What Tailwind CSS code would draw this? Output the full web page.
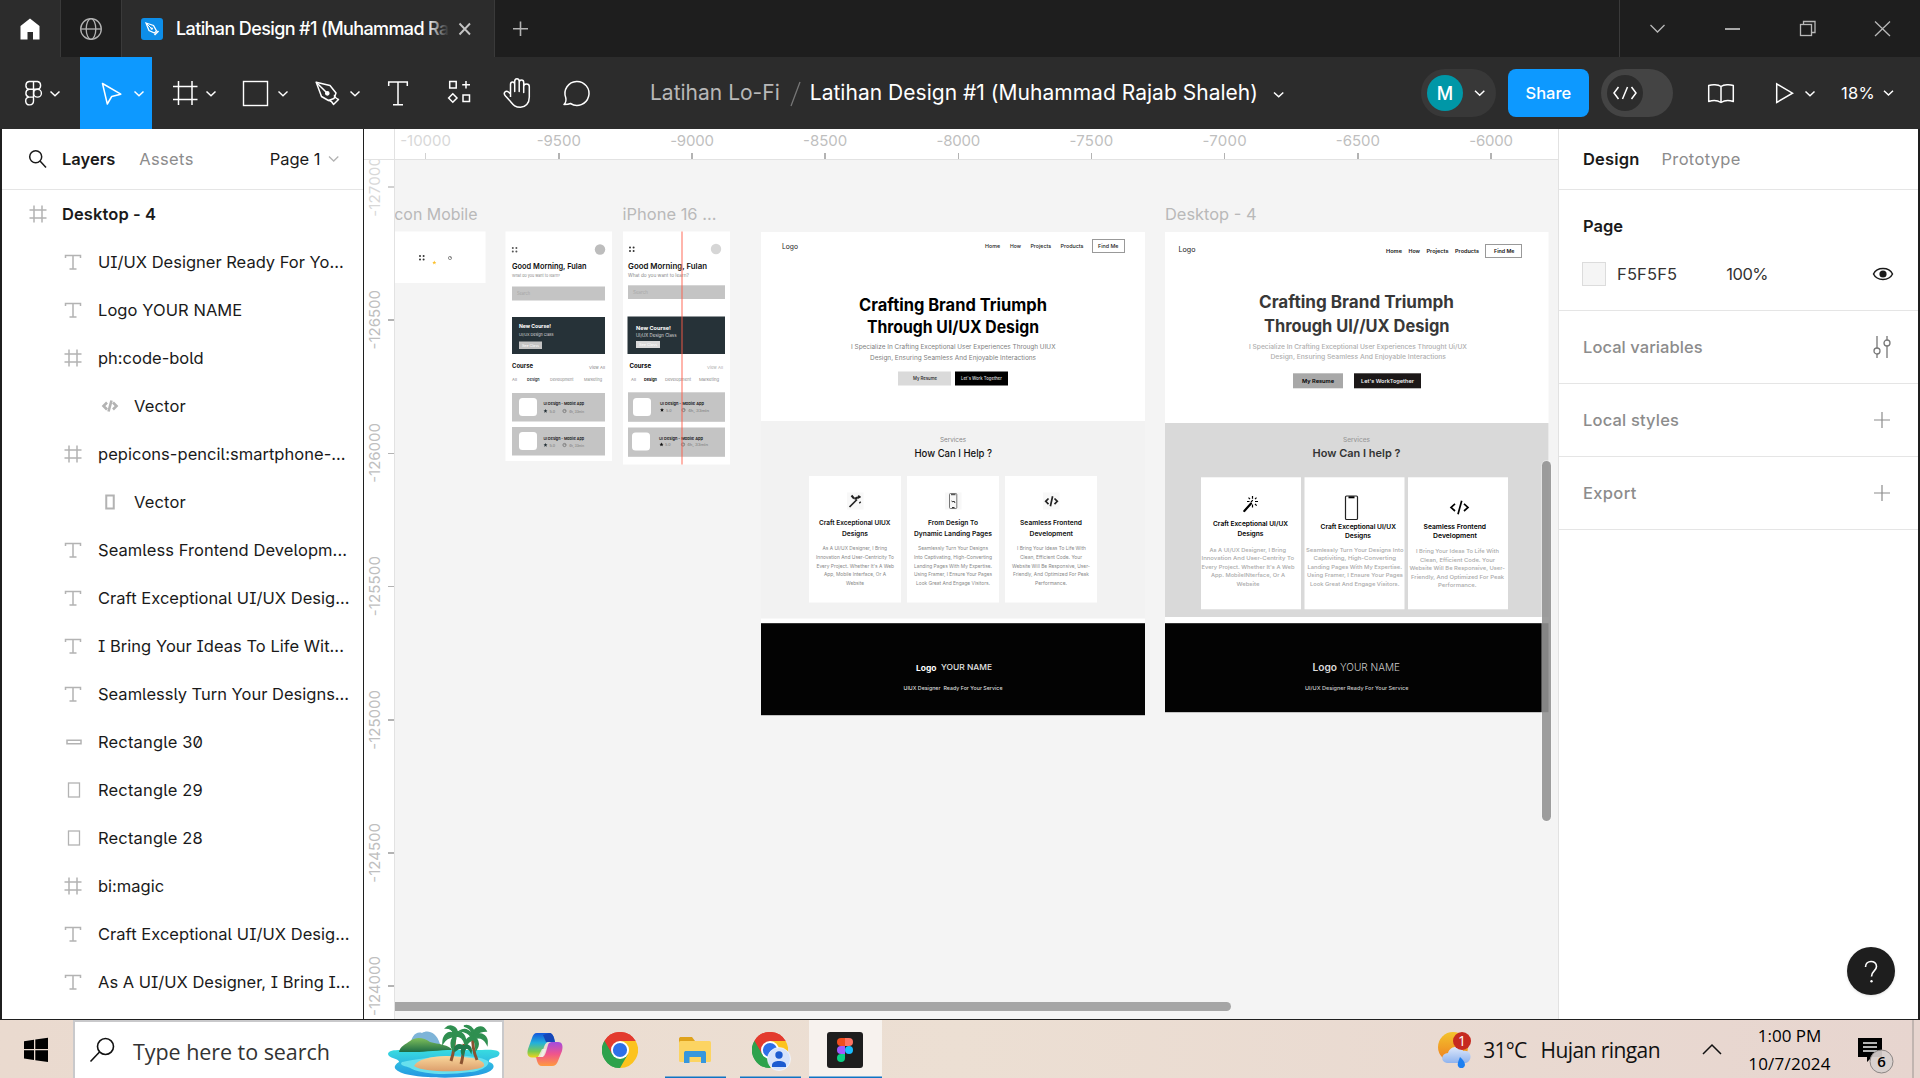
<!DOCTYPE html>
<html lang="en">
<head>
<meta charset="utf-8">
<title>Latihan Design #1</title>
<script src="https://cdn.jsdelivr.net/npm/@tailwindcss/browser@4"></script>
</head>
<body class="w-[1920px] h-[1078px] overflow-hidden flex flex-col font-['Inter',sans-serif] bg-[#1e1e1e] text-[16.5px] whitespace-nowrap [&_svg]:shrink-0">

<svg class="hidden">
  <symbol id="i-text" viewBox="0 0 18 18"><path d="M1.5 5V2.5H16.5V5M9 2.500V16M5.500 16H12.500" fill="none" stroke="#b3b3b3" stroke-width="1.500"/></symbol>
  <symbol id="i-frame" viewBox="0 0 18 18"><path d="M5 .5V17.500M13 .5V17.500M.5 5H17.500M.5 13H17.500" fill="none" stroke="#b3b3b3" stroke-width="1.500"/></symbol>
  <symbol id="i-code" viewBox="0 0 18 18"><path d="M6 5.500L2.500 9L6 12.500M12 5.500L15.500 9L12 12.500M10.500 3.500L7.500 14.500" fill="none" stroke="#b3b3b3" stroke-width="2.600"/></symbol>
  <symbol id="i-phone" viewBox="0 0 18 18"><rect x="5.250" y="2.500" width="7.500" height="13" fill="none" stroke="#b3b3b3" stroke-width="2"/></symbol>
  <symbol id="i-bar" viewBox="0 0 18 18"><rect x="2" y="7.250" width="14" height="3.500" fill="none" stroke="#b3b3b3" stroke-width="1.500"/></symbol>
  <symbol id="i-rect" viewBox="0 0 18 18"><rect x="3.500" y="2" width="11" height="14" fill="none" stroke="#b3b3b3" stroke-width="1.300"/></symbol>
  <symbol id="i-plus" viewBox="0 0 18 18"><path d="M9 1V17M1 9H17" fill="none" stroke="#8c8c8c" stroke-width="1.200"/></symbol>
  <symbol id="i-chrome" viewBox="-18 -18 36 36">
    <path d="M0 0L-15.600 -9A18 18 0 0 1 15.600 -9Z" fill="#e33b2e"/>
    <path d="M0 0L15.600 -9A18 18 0 0 1 0 18Z" fill="#fcc31e"/>
    <path d="M0 0L0 18A18 18 0 0 1 -15.600 -9Z" fill="#2da24c"/>
    <path d="M0 -9H15.600L8 4L0 0Z" fill="#fcc31e"/><path d="M-15.600 -9L-7.800 4.500L0 0L0 -9L15.600 -9A18 18 0 0 0 -15.600 -9Z" fill="#e33b2e"/>
    <path d="M-15.600 -9L-7.800 4.500L0 9L7.800 4.500L0 18A18 18 0 0 1 -15.600 -9Z" fill="#2da24c"/>
    <circle r="9" fill="#fff"/><circle r="7.100" fill="#2d6fe8"/>
  </symbol>
</svg>

<!-- Tab strip -->
<header class="h-[57px] flex shrink-0 bg-[#1e1e1e]">
  <div class="w-[60px] bg-[#2c2c2c] flex items-center justify-center"><svg class="w-[60px] h-[57px]" viewBox="0 0 60 57"><path d="M30 18.500L39.500 26V39.500H33V32H27.500V39.500H20.500V26Z" fill="#fff"/></svg></div>
  <div class="w-[62px] border-x border-[#3a3a3a]"><svg class="w-[60px] h-[57px]" viewBox="0 0 60 57"><g fill="none" stroke="#b3b3b3" stroke-width="1.300"><circle cx="30" cy="29" r="10.300"/><ellipse cx="30" cy="29" rx="4.800" ry="10.300"/><path d="M20 29H40"/></g></svg></div>
  <div class="w-[373px] bg-[#2c2c2c] border-r border-[#3a3a3a] flex items-center pl-[19px]">
    <svg class="w-[22px] h-[22px]" viewBox="0 0 22 22"><rect width="22" height="22" rx="3" fill="#0d8ee9"/><g transform="translate(5 5)"><path d="M0 0L7.500 2.500L10.500 8L8.500 10L3 7.500Z" fill="none" stroke="#fff" stroke-width="1.300"/><path d="M0 0L5.500 5.500" stroke="#fff"/><circle cx="5.800" cy="5.600" r="1.200" fill="#fff"/><path d="M8.500 12L12.500 8" stroke="#fff" stroke-width="1.600"/></g></svg>
    <div class="ml-[13px] w-[273px] overflow-hidden text-white font-medium text-[18px] relative leading-[30px]"><span data-w="276">Latihan Design #1 (Muhammad Raj</span><div class="absolute right-0 top-0 w-[22px] h-full bg-linear-to-r from-[#2c2c2c]/0 to-[#2c2c2c]"></div></div>
    <svg class="ml-[8px] w-[16px] h-[16px]" viewBox="0 0 16 16"><path d="M2.500 2.500L13 13.500M13 2.500L2.500 13.500" stroke="#c4c4c4" stroke-width="1.900"/></svg>
  </div>
  <svg class="w-[50px] h-[57px]" viewBox="0 0 50 57"><path d="M25.500 21.500V36M18 28.750H33" stroke="#b3b3b3" stroke-width="1.600"/></svg>
  <div class="flex-1"></div>
  <svg class="w-[301px] h-[57px] border-l border-[#3a3a3a]" viewBox="0 0 300 57"><g fill="none" stroke="#b8b8b8" stroke-width="1.300"><path d="M30.500 25L37.500 32L44.500 25"/><path d="M105 29H120" stroke-width="1.800"/><rect x="180.500" y="24.500" width="11" height="11"/><path d="M183.500 24.500V21.500H195V32.500H191.500"/><path d="M255 21.500L270 36M270 21.500L255 36"/></g></svg>
</header>

<!-- Toolbar -->
<div class="h-[72px] flex shrink-0 bg-[#2c2c2c] pl-2">
  <svg class="w-[72px] h-[72px]" viewBox="8 57 72 72"><g fill="none" stroke="#fff" stroke-width="1.400"><path d="M33.500 81.500H29A4 4 0 0 0 29 89.300H33.500ZM33.500 81.500H37.500A4 4 0 0 1 37.500 89.300H33.500M33.500 89.300H29A4 4 0 0 0 29 97.100H33.500ZM33.500 97.100H29A3.900 3.900 0 1 0 33.500 101ZM33.500 89.300V97.100"/><circle cx="37.500" cy="93.200" r="3.900"/><path d="M50.500 91.500L55 95.700L59.500 91.500" stroke-width="1.500"/></g></svg>
  <svg class="w-[72px] h-[72px] bg-[#0d99ff]" viewBox="80 57 72 72"><g fill="none" stroke="#fff" stroke-width="1.500"><path d="M102.500 83.500L120.800 94.200L111.700 96.500L107.300 104Z" stroke-linejoin="round"/><path d="M134.500 91.500L139 95.700L143.500 91.500"/></g></svg>
  <svg class="w-[72px] h-[72px]" viewBox="152 57 72 72"><g fill="none" stroke="#fff" stroke-width="1.500"><path d="M178.500 81V105M192 81V105M173 86.500H197.500M173 99.500H197.500"/><path d="M206.500 91.500L211 95.700L215.500 91.500"/></g></svg>
  <svg class="w-[72px] h-[72px]" viewBox="224 57 72 72"><g fill="none" stroke="#fff" stroke-width="1.400"><rect x="243.500" y="81.500" width="24" height="24"/><path d="M278.500 91.500L283 95.700L287.500 91.500"/></g></svg>
  <svg class="w-[72px] h-[72px]" viewBox="296 57 72 72"><g fill="none" stroke="#fff" stroke-width="1.500" stroke-linejoin="round"><path d="M316.200 82.200L330 85.500L336 93L334 98.500L328.500 100.500L321.500 96.500Z"/><path d="M316.200 82.200L326.500 92.500M328.500 100.500C331 100 332.500 102.500 333.500 104.500L338.500 99.500C336.500 98.500 334 97 334.500 95"/><circle cx="327.300" cy="93.300" r="1.600" fill="#fff"/><path d="M350.500 91.500L355 95.700L359.500 91.500"/></g></svg>
  <svg class="w-[60px] h-[72px]" viewBox="368 57 60 72"><path d="M388.700 86V82H407.300V86M398 82V104.700M393 104.700H403" fill="none" stroke="#fff" stroke-width="1.500"/></svg>
  <svg class="w-[60px] h-[72px]" viewBox="428 57 60 72"><g fill="none" stroke="#fff" stroke-width="1.500"><rect x="449.700" y="81.500" width="6.500" height="6.500"/><path d="M466 81V88.500M462.200 84.700H470M452.800 93.700L457 98L452.800 102.300L448.600 98Z"/><rect x="463" y="95" width="6.500" height="6.500"/></g></svg>
  <svg class="w-[60px] h-[72px]" viewBox="488 57 60 72"><path d="M510.500 97V84.500C510.500 81.200 514.700 81.200 514.700 84.500V91.500V81.500C514.700 77.800 519.200 77.800 519.200 81.500V91.500V82.500C519.200 79.300 523.700 79.300 523.700 82.500V92.500V86.500C523.700 83.300 529.300 83.300 529.300 86.500V97C529.300 103.500 525.500 107.300 520.500 107.300C514.500 107.300 513 104.500 510.500 101.500L505.500 96C502.500 92.500 506 90 508.500 92L510.500 94" fill="none" stroke="#fff" stroke-width="1.500" stroke-linejoin="round"/></svg>
  <svg class="w-[60px] h-[72px]" viewBox="548 57 60 72"><path d="M564 104.500C566.500 102 566.500 100.500 565.700 97.500A12 12 0 1 1 570.500 103.500C568.500 104.500 566.500 104.500 564 104.500Z" fill="none" stroke="#fff" stroke-width="1.500" stroke-linejoin="round"/></svg>
  <div class="ml-[42px] flex items-center text-[21px] text-white">
    <span data-w="130" class="text-[#b8b8b8]">Latihan Lo-Fi</span>
    <svg class="w-[30px] h-[28px]" viewBox="780 78 30 28"><path d="M800 81L791 105" stroke="#777" stroke-width="1.300"/></svg>
    <span data-w="448">Latihan Design #1 (Muhammad Rajab Shaleh)</span>
    <svg class="ml-[15px] mt-1 w-[12px] h-[8px]" viewBox="0 0 12 8"><path d="M1 1.500L5.700 5.800L10.300 1.500" fill="none" stroke="#fff" stroke-width="1.500"/></svg>
  </div>
  <div class="flex-1"></div>
  <div class="flex items-center text-white">
    <div class="w-[75px] h-12 rounded-full bg-[#383838] flex items-center pl-1.5"><div class="size-9 rounded-full bg-[#0097a7] flex items-center justify-center text-[18px] font-medium">M</div>
      <svg class="ml-[11px] w-[12px] h-[8px]" viewBox="0 0 12 8"><path d="M1 1.800L5.700 6.200L10.300 1.800" fill="none" stroke="#fff" stroke-width="1.500"/></svg></div>
    <div class="ml-3 w-[81px] h-12 rounded-lg bg-[#0d99ff] flex items-center justify-center font-medium"><span data-w="46">Share</span></div>
    <div class="ml-3 w-[72px] h-12 rounded-full bg-[#444] flex items-center pl-1.5"><div class="size-9 rounded-full bg-[#2c2c2c]"><svg class="size-9" viewBox="0 0 36 36"><path d="M11.500 12L7 18L11.500 24M24.500 12L29 18L24.500 24M20.500 12L15.500 24" fill="none" stroke="#fff" stroke-width="1.500"/></svg></div></div>
    <svg class="w-[78px] h-[72px]" viewBox="1673 57 78 72"><path d="M1721 86.500C1718 84.300 1712 84.300 1708.700 85.500V101.500C1713 100 1718 100.500 1721 102.500C1724 100.500 1729 100 1733.300 101.500V85.500C1730 84.300 1724 84.300 1721 86.500ZM1721 86.500V102.500" fill="none" stroke="#fff" stroke-width="1.500" stroke-linejoin="round"/></svg>
    <svg class="w-[90px] h-[72px]" viewBox="1751 57 90 72"><g fill="none" stroke="#fff" stroke-width="1.500"><path d="M1776.700 83.800L1792.500 93.200L1776.700 102.500Z"/><path d="M1805.500 91.500L1810 95.700L1814.500 91.500"/></g></svg>
    <span data-w="34">18%</span>
    <svg class="ml-[8px] mr-[25px] w-[12px] h-[8px]" viewBox="0 0 12 8"><path d="M1 1.800L5.500 6L10 1.800" fill="none" stroke="#fff" stroke-width="1.500"/></svg>
  </div>
</div>

<main class="h-[891px] flex shrink-0 border-l-2 border-b border-[#1f1f1f]">
  <!-- Layers -->
  <aside class="w-[362px] shrink-0 bg-white border-r border-[#1f1f1f] flex flex-col text-[#1a1a1a]">
    <div class="h-[61px] shrink-0 border-b border-[#e5e5e5] flex items-center pl-[26px]">
      <svg class="w-[20px] h-[20px]" viewBox="0 0 20 20"><g fill="none" stroke="#1a1a1a" stroke-width="1.500"><circle cx="7.700" cy="7.700" r="6"/><path d="M12 12L18 18.500"/></g></svg>
      <span data-w="53" class="ml-[14px] font-semibold">Layers</span><span data-w="54" class="ml-[24px] text-[#8c8c8c]">Assets</span><span data-w="51" class="ml-[76px]">Page 1</span>
      <svg class="ml-[7px] w-[12px] h-[8px]" viewBox="0 0 12 8"><path d="M1 1.500L5.700 6L10.300 1.500" fill="none" stroke="#b3b3b3" stroke-width="1.300"/></svg>
    </div>
    <div class="[font-feature-settings:'ss02'] [&>div]:h-12 [&>div]:flex [&>div]:items-center [&_svg]:size-[18px]">
      <div class="pl-[27px] gap-[15px] font-semibold"><svg><use href="#i-frame"/></svg><span data-w="94">Desktop - 4</span></div>
      <div class="pl-[62px] gap-4"><svg><use href="#i-text"/></svg><span data-w="246">UI/UX Designer Ready For Yo...</span></div>
      <div class="pl-[62px] gap-4"><svg><use href="#i-text"/></svg><span data-w="144">Logo YOUR NAME</span></div>
      <div class="pl-[62px] gap-4"><svg><use href="#i-frame"/></svg><span data-w="106">ph:code-bold</span></div>
      <div class="pl-[99px] gap-[15px]"><svg><use href="#i-code"/></svg><span data-w="52">Vector</span></div>
      <div class="pl-[62px] gap-4"><svg><use href="#i-frame"/></svg><span data-w="248">pepicons-pencil:smartphone-...</span></div>
      <div class="pl-[99px] gap-[15px]"><svg><use href="#i-phone"/></svg><span data-w="52">Vector</span></div>
      <div class="pl-[62px] gap-4"><svg><use href="#i-text"/></svg><span data-w="249">Seamless Frontend Developm...</span></div>
      <div class="pl-[62px] gap-4"><svg><use href="#i-text"/></svg><span data-w="252">Craft Exceptional UI/UX Desig...</span></div>
      <div class="pl-[62px] gap-4"><svg><use href="#i-text"/></svg><span data-w="246">I Bring Your Ideas To Life Wit...</span></div>
      <div class="pl-[62px] gap-4"><svg><use href="#i-text"/></svg><span data-w="251">Seamlessly Turn Your Designs...</span></div>
      <div class="pl-[63px] gap-[15px]"><svg><use href="#i-bar"/></svg><span data-w="105">Rectangle 30</span></div>
      <div class="pl-[63px] gap-[15px]"><svg><use href="#i-rect"/></svg><span data-w="105">Rectangle 29</span></div>
      <div class="pl-[63px] gap-[15px]"><svg><use href="#i-rect"/></svg><span data-w="105">Rectangle 28</span></div>
      <div class="pl-[62px] gap-4"><svg><use href="#i-frame"/></svg><span data-w="66">bi:magic</span></div>
      <div class="pl-[62px] gap-4"><svg><use href="#i-text"/></svg><span data-w="252">Craft Exceptional UI/UX Desig...</span></div>
      <div class="pl-[62px] gap-4"><svg><use href="#i-text"/></svg><span data-w="252">As A UI/UX Designer, I Bring I...</span></div>
    </div>
  </aside>

  <!-- Rulers and canvas -->
  <section class="w-[1194px] shrink-0 flex flex-col bg-[#f4f4f4] text-[#bfbfbf] text-[15px]">
    <div class="h-[31px] shrink-0 flex bg-white border-b border-[#e2e2e2]">
      <div class="w-[31px] shrink-0 border-r border-[#e2e2e2]"></div>
      <div class="flex-1 flex overflow-hidden [&>div]:w-[133.200px] [&>div]:shrink-0 [&>div]:flex [&>div]:flex-col [&>div]:items-center [&>div]:justify-between [&_span]:leading-[23px] [&_i]:w-[1.500px] [&_i]:h-[6px] [&_i]:bg-[#b3b3b3]">
        <div class="-ml-[36px] opacity-60"><span data-w="51">-10000</span><i></i></div>
        <div><span data-w="44">-9500</span><i></i></div><div><span data-w="44">-9000</span><i></i></div><div><span data-w="44">-8500</span><i></i></div><div><span data-w="44">-8000</span><i></i></div><div><span data-w="44">-7500</span><i></i></div><div><span data-w="44">-7000</span><i></i></div><div><span data-w="44">-6500</span><i></i></div><div><span data-w="44">-6000</span><i></i></div>
      </div>
    </div>
    <div class="flex-1 min-h-0 flex">
      <div class="w-[31px] shrink-0 bg-white border-r border-[#e2e2e2] overflow-hidden flex flex-col [&>div]:h-[133.200px] [&>div]:shrink-0 [&>div]:flex [&>div]:items-center [&>div]:justify-between [&>div]:pl-[1px] [&_span]:[writing-mode:vertical-rl] [&_span]:rotate-180 [&_span]:leading-[20px] [&_i]:h-[1.500px] [&_i]:w-[6px] [&_i]:bg-[#b3b3b3]">
        <div class="-mt-[39.600px] opacity-60"><span data-h="60">-127000</span><i></i></div>
        <div><span data-h="60">-126500</span><i></i></div><div><span data-h="60">-126000</span><i></i></div><div><span data-h="60">-125500</span><i></i></div><div><span data-h="60">-125000</span><i></i></div><div><span data-h="60">-124500</span><i></i></div><div><span data-h="60">-124000</span><i></i></div>
      </div>
      <div class="relative flex-1 overflow-hidden">
        <svg class="w-[1163px] h-[859px]" viewBox="395 160 1163 859">
          <g id="art"></g>
          <g id="glyphs" fill="none"></g>
          <g id="copy"></g>
          <rect x="681" y="231.500" width="2" height="233" fill="#ff5a46" opacity=".45"/>
        </svg>
        <div class="absolute left-0 top-[842px] w-[836px] h-[9px] rounded-r-full bg-[#a6a6a6]"></div>
        <div class="absolute left-[1146.500px] top-[301px] w-[9px] h-[360px] rounded-full bg-[#949494]/90 outline outline-white/30"></div>
      </div>
    </div>
  </section>

  <!-- Properties -->
  <aside class="w-[361px] relative bg-white border-x border-l-[#e2e2e2] border-r-[#1f1f1f] text-[#8c8c8c] flex flex-col">
    <div class="h-[61px] shrink-0 border-b border-[#e5e5e5] flex items-center pl-6"><span data-w="56" class="font-semibold text-[#1a1a1a]">Design</span><span data-w="79" class="ml-[22px]">Prototype</span></div>
    <div class="h-[121px] shrink-0 border-b border-[#e5e5e5] pt-3 pl-6 text-[#333]">
      <div class="h-12 flex items-center font-semibold text-[#1a1a1a]"><span data-w="40">Page</span></div>
      <div class="h-12 flex items-center"><i class="size-6 bg-[#f5f5f5] border border-[#dcdcdc] -ml-px"></i><span data-w="60" class="ml-[11px]">F5F5F5</span><span data-w="42" class="ml-[49px]">100%</span>
        <svg class="ml-[104px] w-[22px] h-[16px]" viewBox="0 0 22 16"><path d="M1.500 8C5 .8 17 .8 20.500 8C17 15.200 5 15.200 1.500 8Z" fill="none" stroke="#1a1a1a" stroke-width="1.500"/><circle cx="11" cy="8" r="3.600" fill="#1a1a1a"/></svg></div>
    </div>
    <div class="h-[73px] shrink-0 border-b border-[#e5e5e5] flex items-center justify-between pl-6 pr-[26px] font-medium"><span data-w="120">Local variables</span>
      <svg class="w-[20px] h-[22px]" viewBox="0 0 20 22"><g fill="none" stroke="#777" stroke-width="1.300"><path d="M5 0V12M5 18V22M15 0V4M15 10V22"/><circle cx="5" cy="15" r="3"/><circle cx="15" cy="7" r="3"/></g></svg></div>
    <div class="h-[73px] shrink-0 border-b border-[#e5e5e5] flex items-center justify-between pl-6 pr-[27px] font-medium"><span data-w="96">Local styles</span><svg class="size-[18px]"><use href="#i-plus"/></svg></div>
    <div class="h-[73px] shrink-0 border-b border-[#e5e5e5] flex items-center justify-between pl-6 pr-[27px] font-medium"><span data-w="54">Export</span><svg class="size-[18px]"><use href="#i-plus"/></svg></div>
    <div class="absolute right-[23px] bottom-[24px] size-12 rounded-full bg-[#1e1e1e] shadow"><svg class="size-12" viewBox="0 0 48 48"><path d="M18.500 20C18.500 12.800 29.500 12.800 29.500 19.500C29.500 24 24.500 24 24.500 29.500" fill="none" stroke="#fff" stroke-width="1.600"/><circle cx="24.500" cy="34.200" r="1.200" fill="#fff"/></svg></div>
  </aside>
</main>

<!-- Taskbar -->
<footer class="h-[58px] flex shrink-0 bg-linear-to-r from-[#eadacf] via-[#ecdfd3] to-[#e7d5cf] font-['Open_Sans',sans-serif] text-black">
  <svg class="w-[73px] h-[58px]" viewBox="0 1020 73 58"><path d="M24 1041.300L34 1039.700V1049H24ZM35.300 1039.500L48 1037.800V1049H35.300ZM24 1050.300H34V1060L24 1058.500ZM35.300 1050.300H48V1062L35.300 1060.200Z"/></svg>
  <div class="w-[431px] shrink-0 bg-white border-2 border-b-0 border-[#c9c9cb] flex items-center">
    <svg class="w-[58px] h-[56px]" viewBox="75 1022 58 56"><g fill="none" stroke="#111" stroke-width="1.600"><circle cx="105.500" cy="1046.500" r="8"/><path d="M99.500 1052L90.500 1061.500"/></g></svg>
    <span data-w="197" class="text-[21.500px] text-[#333] pt-1">Type here to search</span>
    <svg class="ml-[57px] w-[114px] h-[56px]" viewBox="387 1022 114 56">
      <defs><linearGradient id="sea" x1="0" y1="0" x2="0" y2="1"><stop offset="0" stop-color="#38dce0"/><stop offset="1" stop-color="#2496e2"/></linearGradient><linearGradient id="hill" x1="0" y1="0" x2="0" y2="1"><stop offset="0" stop-color="#7fbf5a"/><stop offset="1" stop-color="#1d6b45"/></linearGradient><linearGradient id="sand" x1="0" y1="0" x2="0" y2="1"><stop offset="0" stop-color="#f9d79b"/><stop offset="1" stop-color="#dc9e6c"/></linearGradient></defs>
      <path d="M388 1054C388 1049 400 1050 408 1050H482C492 1049 502 1050 499 1055C497 1059 488 1057 489 1062C496 1064 495 1070 486 1073C470 1079 425 1079 405 1074C395 1071 391 1067 399 1062C400 1059 388 1058 388 1054Z" fill="url(#sea)"/>
      <path d="M410 1047C411 1036 416 1031 422 1033C427 1030 436 1031 440 1044V1050H410Z" fill="#7eb4d8"/>
      <path d="M399 1052C400 1046 406 1044 410 1041C417 1036 424 1038 430 1042C438 1044 450 1045 452 1050C440 1050 425 1052 415 1052Z" fill="url(#hill)"/>
      <path d="M402 1062C415 1059 470 1050 488 1061C491 1066 478 1072 470 1072C450 1075 425 1075 412 1069C408 1066 398 1066 402 1062Z" fill="#67e0ee"/>
      <path d="M414 1066C418 1058 440 1054 460 1057C474 1057 486 1061 484 1066C478 1072 425 1074 414 1066Z" fill="url(#sand)"/>
      <g fill="none" stroke="#8a5230" stroke-width="3"><path d="M454 1034C455 1044 454 1052 451 1061"/><path d="M464 1044C463 1054 463 1058 461 1064"/><path d="M473 1036C472 1046 474 1053 477 1060"/></g>
      <g fill="#2f8f50" stroke="#2f8f50" stroke-width="1.600"><path d="M454 1034C448 1030 443 1036 443 1043C446 1038 450 1037 454 1036C450 1042 451 1047 453 1050C454 1044 456 1040 456 1036C462 1036 464 1040 465 1044C467 1036 461 1031 457 1032C457 1027 450 1024 446 1028C450 1028 453 1031 454 1034Z"/><path d="M473 1035C467 1028 463 1029 460 1031C465 1031 470 1034 471 1037C466 1038 465 1043 466 1046C468 1042 471 1040 473 1039C476 1042 476 1046 476 1050C480 1045 478 1041 476 1038C481 1037 485 1040 487 1044C488 1036 482 1033 477 1034C480 1031 484 1031 486 1031C482 1024 475 1028 474 1032C472 1027 468 1025 464 1026C468 1027 472 1030 473 1035Z"/><path d="M463 1046C458 1043 454 1046 455 1051C458 1048 460 1048 462 1048C461 1051 462 1054 463 1055C464 1051 465 1049 466 1048C469 1048 470 1050 471 1052C472 1047 468 1044 464 1046Z" fill="#1f7a4c" stroke="#1f7a4c"/></g>
    </svg>
  </div>
  <svg class="w-[378px] h-[58px]" viewBox="504 1020 378 58">
    <defs><linearGradient id="cpl" x1="0" y1="0" x2="0" y2="1"><stop offset="0" stop-color="#1456dc"/><stop offset=".4" stop-color="#22b0dc"/><stop offset=".75" stop-color="#7cc94e"/><stop offset="1" stop-color="#f5d51c"/></linearGradient><linearGradient id="cpr" x1="0" y1="0" x2="0" y2="1"><stop offset="0" stop-color="#a24be0"/><stop offset=".5" stop-color="#f0558c"/><stop offset="1" stop-color="#ff9a3e"/></linearGradient></defs>
    <path d="M537 1033H549C552 1033 553 1035 554 1038L555 1042H549C546 1042 545 1044 544 1047L541 1055C540 1058 538 1058 535 1057.500H532C527 1057 527 1053 528 1049L532 1038C533 1035 534 1033 537 1033Z" fill="url(#cpl)"/>
    <path d="M549 1033C552 1033 553 1035 554 1038L555 1042H546L543 1035Z" fill="#1646b8"/>
    <path d="M553 1042H558C563 1042 563 1047 562 1051L558 1061C557 1064 555 1066 552 1066H542C539 1066 538 1064 537 1061L536 1057H541C544 1057 545 1055 546 1052L548 1045C549 1042 551 1042 553 1042Z" fill="url(#cpr)"/>
    <path d="M542 1049L546 1049L543 1057H538Z" fill="#f4f0ee" opacity=".8"/>
    <use href="#i-chrome" x="602" y="1032" width="36" height="36"/>
    <path d="M679 1039C679 1037.500 680 1037 681 1037H692L695 1041V1046H679Z" fill="#dfa21b"/><rect x="679" y="1041" width="32" height="21" rx="1.500" fill="#fcd462"/><path d="M684 1063V1053C684 1051.500 685 1051 686 1051H704C705 1051 706 1051.500 706 1053V1063H701V1057H689.500V1063Z" fill="#3797dd"/>
    <use href="#i-chrome" x="752" y="1032" width="36" height="36"/>
    <circle cx="779" cy="1059" r="11.500" fill="#d6e3fb" stroke="#fff" stroke-width=".6"/><circle cx="779" cy="1055" r="3.700" fill="#1c5bd0"/><path d="M772 1067V1065C772 1059.500 786 1059.500 786 1065V1067Z" fill="#1c5bd0"/>
    <rect x="809" y="1020" width="73" height="58" fill="#f7f2ee"/>
    <rect x="827" y="1032" width="36" height="36" rx="3" fill="#1e1e1e"/>
    <path d="M845 1038H841A4 4 0 0 0 841 1046H845Z" fill="#f24e1e"/><path d="M845 1038H849A4 4 0 0 1 849 1046H845Z" fill="#ff7262"/><path d="M845 1046H841A4 4 0 0 0 841 1054H845Z" fill="#a259ff"/><circle cx="849" cy="1050" r="4" fill="#1abcfe"/><path d="M845 1054H841A4 4 0 1 0 845 1058Z" fill="#0acf83"/>
    <path d="M665 1077.300H726M740 1077.300H801M809 1077.300H882" stroke="#0f74c4" stroke-width="1.600"/>
  </svg>
  <div class="flex-1"></div>
  <svg class="w-[46px] h-[58px]" viewBox="1438 1020 46 58">
    <defs><linearGradient id="sun" x1="0" y1="0" x2="0" y2="1"><stop offset="0" stop-color="#f3c32c"/><stop offset="1" stop-color="#ee7d22"/></linearGradient><linearGradient id="cl" x1="0" y1="0" x2="0" y2="1"><stop offset="0" stop-color="#dfe9fb"/><stop offset="1" stop-color="#8fb3ee"/></linearGradient></defs>
    <circle cx="1454" cy="1047" r="15" fill="url(#sun)"/><path d="M1448 1063C1441 1062 1442 1053 1449 1053C1451 1045 1463 1045 1464 1051C1473 1049 1474 1061 1467 1063Z" fill="url(#cl)"/><path d="M1461 1057C1464 1060 1466 1062 1466 1065A3.700 3.700 0 0 1 1458.700 1065C1458.700 1062 1460 1060 1461 1057Z" fill="#1d7ff0"/><circle cx="1463" cy="1041" r="9" fill="#c62a20"/><text x="1459" y="1046" font-size="14" fill="#fff">1</text>
  </svg>
  <div class="flex items-center text-[21px] text-[#111] pt-1"><span data-w="43">31°C</span><span data-w="119" class="ml-[14px]">Hujan ringan</span></div>
  <svg class="w-[88px] h-[58px]" viewBox="1660 1020 88 58"><path d="M1703 1054L1712 1045L1721 1054" fill="none" stroke="#111" stroke-width="1.500"/></svg>
  <div class="w-[83px] flex flex-col items-center text-[17px] leading-[28px] pt-[2px]"><span data-w="64">1:00 PM</span><span data-w="83">10/7/2024</span></div>
  <svg class="w-[89px] h-[58px]" viewBox="1831 1020 89 58"><path d="M1858 1038H1882V1057H1872L1867 1062V1057H1858Z"/><path d="M1863 1043H1877M1863 1047H1877M1863 1051H1877" stroke="#eee" stroke-width="1.300"/><circle cx="1881.500" cy="1061.500" r="11.500" fill="#d8d0ce" fill-opacity=".92" stroke="#8c8684"/><text x="1877.200" y="1067" font-size="15" font-weight="600">6</text><path d="M1913 1020V1078" stroke="#b5aaa6" stroke-width="1.500"/></svg>
</footer>

<script>
  // Canvas shapes: x, y, width, height, fill, corner radius, stroke
  const shapes = [
    [395,231.5,90.5,51.5,'#fff'],
    [505.5,231.5,106.5,229.5,'#fff'],[512,286.5,93,14,'#c4c4c4'],[512,317,93,37,'#263238'],[519,341.500,23,7.500,'#c4c4c4'],
    [512,393,93,28.5,'#c4c4c4'],[519,398,18,18,'#fff',3.5],[512,427,93,28.5,'#c4c4c4'],[519,432,18,18,'#fff',3.5],
    [623,231.5,107,233,'#fff'],[628,285.300,97,13.7,'#c4c4c4'],[627.500,316.500,97.500,37.5,'#263238'],[636,341,24,7,'#d9d9d9'],
    [628,392.300,97,29.500,'#c4c4c4'],[633,398,18,18,'#fff',3.5],[628,427.500,97,29.300,'#c4c4c4'],[632,432.500,18,18,'#fff',3.5],
    [761,232,384,483,'#fff'],[1092.500,239.500,32,13,'none',0,'#999'],[898,371.500,53,14,'#dadada'],[955,371.500,53,14,'#000'],
    [761,421,384,197.5,'#f2f2f2'],[809,476,92,126.500,'#fff'],[907,476,92,126.500,'#fff'],[1005,476,92,126.500,'#fff'],
    [847,492.500,16.500,17,'#f8f8f8'],[945,492.500,16.500,17,'#f8f8f8'],[1043,492.500,16.500,17,'#f8f8f8'],[761,623.200,384,92,'#030303'],
    [1165,232,383.500,480,'#fff'],[1485.500,244.500,36,13,'none',0,'#999'],[1293,373.300,50,15,'#a8a8a8'],[1354,373.300,67,15,'#1c1818'],
    [1165,423,383.500,194,'#d9d9d9'],[1201,477.300,100,132,'#fff'],[1304.500,477.300,100,132,'#fff'],[1408,477.300,100,132,'#fff'],[1165,623.200,383.500,89,'#030303'],
  ];
  document.getElementById('art').innerHTML = shapes.map(([x,y,w,h,f,r=0,s='none']) =>
    `<rect x="${x}" y="${y}" width="${w}" height="${h}" fill="${f}" rx="${r}" stroke="${s}"/>`).join('');

  const dots = (x,y,c) => [[0,0],[3.600,0],[0,3.400],[3.600,3.400]].map(([a,b]) => `<circle cx="${x+a}" cy="${y+b}" r="1" fill="${c}"/>`).join('');
  const star = (x,y,c) => `<path transform="translate(${x} ${y})" d="M0-2L.6-.7 2-.6 .9.3 1.300 1.800 0 1-1.300 1.800-.9.3-2-.6-.6-.7Z" fill="${c}"/>`;
  const clock = (x,y) => `<circle cx="${x}" cy="${y}" r="1.600" stroke="#666" stroke-width=".7"/><path d="M${x} ${y}l1-1" stroke="#666" stroke-width=".6"/>`;
  document.getElementById('glyphs').innerHTML =
    dots(420,256,'#333') + star(434.3,262.6,'#fbc02d') + clock(450,258) +
    dots(512.8,248,'#555') + dots(630,247.5,'#333') +
    '<circle cx="600" cy="249.5" r="5.200" fill="#bdbdbd"/><circle cx="716" cy="249" r="5.200" fill="#d6d6d6"/>' +
    star(545.5,411,'#263238') + clock(564.5,411) + star(545.5,445,'#263238') + clock(564.5,445) +
    star(662,410,'#111') + clock(683.5,410) + star(661.5,444.5,'#111') + clock(683,444.5) +
    '<g stroke="#222" stroke-width="1.500"><path d="M849.500 507L857 499.500" stroke-width="1.700"/><path d="M851.500 495.500l2.500 3M859 495.500l-1 3M854.500 499l3-1.500M859.500 502l1 1M859 496.500l1.500 1" stroke-width="2"/></g>' +
    '<rect x="949.500" y="493.500" width="7.300" height="15" rx="1" stroke="#555" stroke-width=".8"/><path d="M951 494.700h4.500M951.500 501l1.500 1 1-1 1 2M952 507.500h2.500" stroke="#333" stroke-width="1"/>' +
    '<path d="M1048.500 498.500l-2.800 2.800 2.800 2.800M1054.500 498.500l2.800 2.800-2.800 2.800M1052.600 496.300l-2.200 10" stroke="#222" stroke-width="1.700"/>' +
    '<path d="M1244.300 511L1251 503.500" stroke="#000" stroke-width="2.200" stroke-linecap="round"/><path d="M1251 502l1.800-1.800M1252.500 496v2.800M1252.500 504.500v3M1247 501.500h2.500M1255 501.500h3M1248.500 497.700l1.500 1.500M1256.500 497.700l-1.500 1.500M1255 504l1.700 1.700" stroke="#000" stroke-width="1.200"/>' +
    '<rect x="1345.500" y="496" width="12" height="23.500" rx="1" stroke="#222" stroke-width="1.200"/><path d="M1348.500 497.300h6" stroke="#000" stroke-width="2"/>' +
    '<path d="M1455 503.800l-4 3.600 4 3.600M1464 503.800l4 3.600-4 3.600M1461.700 500.700l-3.700 13.500" stroke="#000" stroke-width="1.700"/>';

  // Canvas copy: text, left, right, baseline, size, fill, weight
  const G='#888', L='#aeaeae', K='#111', W='#fff';
  const copy = [
    ['Icon Mobile',390,477.5,220,16.5,'#b9b9b9'],['iPhone 16 ...',622.5,716.5,220,16.5,'#b9b9b9'],['Desktop - 4',1165,1256.5,220,16.5,'#b9b9b9'],
    ['Good Morning, Fulan',512,586.5,268.5,8,K,600],['What do you want to learn?',512,560,277,4,G],['Search',517,530,295,4.3,'#a4a4a4'],
    ['New Course!',519,551,328,5.2,W,700],['UI/UX Design Class',519,553.5,336,4,'#ddd'],['See Class',522,539,347,3.6,W],
    ['Course',512,533,368,5.8,K,700],['View All',589,605,368.5,4,G],['All',512,517,381.3,4,G],['Design',527,539.5,381.3,4,'#263238',600],['Development',550,573.5,381.3,4,G],['Marketing',584,602,381.3,4,G],
    ['Good Morning, Fulan',628,707,269.3,7.7,K,600],['What do you want to learn?',628,689,277,4.2,G],['Search',633,648,294,4.5,'#a9a9a9'],
    ['New Course!',636,671,329.7,5.2,W,700],['UI/UX Design Class',636,676.5,337,4.4,'#ddd'],['See Class',639,657,346.3,3.6,W],
    ['Course',629.5,651,368,5.8,'#000',700],['View All',707,723,369,4,L],['All',631,636,380.5,4,G],['Design',644,657,380.5,4,K,700],['Development',665,691,380.5,4,G],['Marketing',699,719,380.5,4,G],
    ['Logo',782,798,248.5,7.2,'#222'],['Home',985,1000,247.8,5,'#222',500],['How',1010,1021,247.8,5,'#222',500],['Projects',1030.5,1051,247.8,5,'#222',500],['Products',1060.5,1083.5,247.8,5,'#222',500],['Find Me',1098,1118.5,247.8,5,'#222',500],
    ['Crafting Brand Triumph',859,1047,310.8,16.8,'#000',700],['Through UI/UX Design',867,1039,332.5,16.8,'#000',700],
    ['I Specialize In Crafting Exceptional User Experiences Through UIUX',851,1055.5,348.7,6.5,'#808080'],['Design, Ensuring Seamless And Enjoyable Interactions',870,1036,359.7,6.5,'#808080'],
    ['My Resume',913,937,380.2,4.3,'#222',500],["Let's Work Together",961,1002,380.2,4.3,'#ddd',500],
    ['Services',940,966,441.8,6.5,G],['How Can I Help ?',914.5,992,457,10,'#111',500],
    ['Craft Exceptional UIUX',819,890.5,524.8,6.5,K,600],['Designs',842,868,536,6.5,K,600],['From Design To',928,978,524.8,6.5,K,600],['Dynamic Landing Pages',914,992,536,6.5,K,600],['Seamless Frontend',1020,1082,524.8,6.5,K,600],['Development',1029.5,1073,536,6.5,K,600],
    ['Logo',916,936.5,670.5,7.8,W,700],['YOUR NAME',941,992,670.3,8.2,'#e5e5e5',500],['UIUX Designer',903.5,940.5,689.8,5,'#ddd',500],['Ready For Your Service',943.5,1002.5,689.8,5,'#ddd',500],
    ['Logo',1178.5,1195.5,252,7.2,'#222'],['Home',1386,1402,252.8,5,K,600],['How',1408.5,1420,252.8,5,K,600],['Projects',1426.5,1448.5,252.8,5,K,600],['Products',1455,1479,252.8,5,K,600],['Find Me',1494,1514.5,252.8,5,K,600],
    ['Crafting Brand Triumph',1259,1454,308.2,17,'#383838',700],['Through UI//UX Design',1264,1449.5,332.2,17,'#383838',700],
    ['I Specialize In Crafting Exceptional User Experiences Throught Ui/UX',1249,1467,348.7,6.2,L,500],['Design, Ensuring Seamless And Enjoyable Interactions',1270.5,1446,358.5,6.2,L,500],
    ['My Resume',1302,1334,382.9,5.3,'#000',600],["Let's  WorkTogether",1361,1414,382.9,5.3,'#eee',600],
    ['Services',1343,1370,441.8,6,'#999',500],['How Can I help ?',1312.5,1400.5,456.5,10.7,'#333',600],
    ['Craft Exceptional UI/UX',1213,1288,525.8,6.2,'#000',600],['Designs',1237.5,1263.5,535.5,6.2,'#000',600],['Craft Exceptional UI/UX',1320.5,1396,528.5,6.2,'#000',600],['Designs',1345,1371,538,6.2,'#000',600],['Seamless Frontend',1423.5,1486,528.5,6.2,'#000',600],['Development',1433,1477,538,6.2,'#000',600],
    ['Logo',1312.500,1337,670.7,10,'#ddd',600],['YOUR NAME',1340,1400,670.5,10.3,'#ccc',300],['UI/UX Designer Ready For Your Service',1305,1408.5,690,5,'#ccc',500],
  ];
  for (const [x,x2,y,y2] of [[543.5,584,405.3,412.6],[543.5,584,439.5,446.6],[660,704,405.2,411.5],[659,703,440,446]]) {
    const near = x < 600;
    copy.push(['UI Design - Mobile App',x,x2,y,3.9,'#111',600], ['5.0',x+6,x+11.500,y2,3.6,'#777'], ['4h, 33min',near?x+25.500:x+28,near?x2:x2+5,y2,3.6,'#777']);
  }
  const paragraphs = [
    [550.4, '#888', 400, ['As A UI/UX Designer, I Bring',822.5,887],['Innovation And User-Centricity To',816,894],["Every Project. Whether It's A Web",816.5,894],['App, Mobile Interface, Or A',824,886],['Website',846,864]],
    [550.4, '#888', 400, ['Seamlessly Turn Your Designs',918,988],['Into Captivating, High-Converting',914,992],['Landing Pages With My Expertise.',914,992],['Using Framer, I Ensure Your Pages',914,992],['Look Great And Engage Visitors.',916,990]],
    [550.4, '#888', 400, ['I Bring Your Ideas To Life With',1017,1086],['Clean, Efficient Code. Your',1020,1082],['Website Will Be Responsive, User-',1012,1090],['Friendly, And Optimized For Peak',1013,1089],['Performance.',1035,1067]],
    [551.8, '#aaa', 500, ['As A UI/UX Designer, I Bring',1209.5,1286],['Innovation And User-Centrity To',1201.5,1294],["Every Project. Whether It's A Web",1201.5,1294.5],['App. MobileINterface, Or A',1211,1285],['Website',1236.5,1259.5]],
    [551.8, '#aaa', 500, ['Seamlessly Turn Your Designs Into',1306,1403.5],['Captiviting, High-Converting',1313.5,1396],['Landing Pages With My Expertise.',1307.5,1402],['Using Framer, I Ensure Your Pages',1307,1403],['Look Great And Engage Visitors.',1310,1399.5]],
    [553.2, '#aaa', 500, ['I Bring Your Ideas To Life With',1416,1499],['Clean, Efficient Code. Your',1420,1495],['Website Will Be Responsive, User-',1409.5,1505],['Friendly, And Optimized For Peak',1411,1504],['Performance.',1438,1476.5]],
  ];
  for (const [y,fill,weight,...lines] of paragraphs)
    lines.forEach(([t,a,b],i) => copy.push([t,a,b,y+i*8.55,weight===500?5.4:5,fill,weight]));
  document.getElementById('copy').innerHTML = copy.map(([t,a,b,y,s,f,w=400]) =>
    `<text x="${a}" y="${y}" font-size="${s}" fill="${f}" font-weight="${w}" textLength="${b-a}" lengthAdjust="spacingAndGlyphs">${t}</text>`).join('');

  // Track labels out to their design widths, again whenever styles or fonts settle
  function fit() {
    document.querySelectorAll('[data-w],[data-h]').forEach(el => {
      const target = +(el.dataset.w || el.dataset.h);
      el.style.display = 'inline-block';
      el.style.flexShrink = 0;
      el.style.letterSpacing = '0px';
      const natural = el.dataset.w ? el.offsetWidth : el.offsetHeight;
      el.style.letterSpacing = (target - natural) / el.textContent.length + 'px';
    });
  }
  fit();
  addEventListener('load', fit);
  document.fonts.ready.then(fit);
  requestAnimationFrame(() => requestAnimationFrame(fit));
  setTimeout(fit, 100);
</script>
</body>
</html>
